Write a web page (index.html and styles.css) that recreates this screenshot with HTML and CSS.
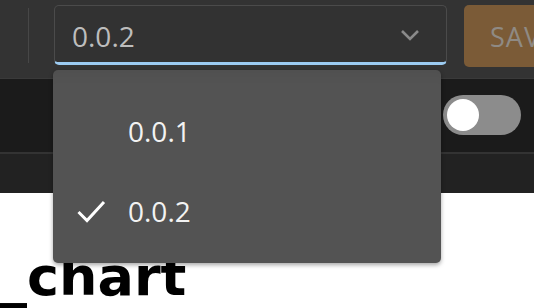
FILE: index.html
```html
<!DOCTYPE html>
<html>
<head>
<meta charset="utf-8">
<link rel="stylesheet" href="styles.css">
</head>
<body>
<div class="page">
  <header class="topbar">
    <div class="divider"></div>
    <div class="select">
      <span class="select-value">0.0.2</span>
      <svg class="chevron" width="20" height="12" viewBox="0 0 20 12"><path d="M2 2 L10 10 L18 2" fill="none" stroke="#8a8a8a" stroke-width="2.6"/></svg>
    </div>
    <button class="save">SAVE</button>
  </header>
  <div class="toolbar">
    <div class="toggle"><div class="knob"></div></div>
  </div>
  <div class="subbar"></div>
  <main class="content">
    <h1 class="title">_chart</h1>
  </main>
  <ul class="menu">
    <li class="menu-item"><span class="check"></span><span>0.0.1</span></li>
    <li class="menu-item"><span class="check"><svg width="30" height="24" viewBox="0 0 30 24"><path d="M2.5 12 L11 20.5 L28 2" fill="none" stroke="#fff" stroke-width="3"/></svg></span><span>0.0.2</span></li>
  </ul>
</div>
</body>
</html>
```

FILE: styles.css
```css
html, body {
  margin: 0;
  padding: 0;
  background: #fff;
  overflow: hidden;
}
.page {
  position: relative;
  width: 534px;
  height: 308px;
  overflow: hidden;
  font-family: "Open Sans", "Noto Sans", sans-serif;
}
.topbar {
  height: 78px;
  background: #333333;
  border-bottom: 1px solid #3a3a3a;
  display: flex;
  align-items: flex-start;
  box-sizing: content-box;
  overflow: hidden;
}
.divider {
  flex-shrink: 0;
  width: 1px;
  height: 55px;
  margin: 8px 0 0 28px;
  background: #474747;
}
.select {
  flex-shrink: 0;
  margin: 5px 0 0 25px;
  width: 393px;
  height: 60px;
  box-sizing: border-box;
  border: 1px solid #4b4b4b;
  border-bottom: 3px solid #9ccbf1;
  border-radius: 5px;
  background: #323232;
  display: flex;
  align-items: center;
  padding: 0 26px 0 17px;
}
.select-value {
  flex: 1;
  color: #bdbdbd;
  font-size: 28px;
  line-height: 1;
  margin-top: 3px;
}
.chevron {
  display: block;
  margin-top: 2px;
}
.save {
  flex-shrink: 0;
  margin: 5px 0 0 17px;
  width: 120px;
  height: 62px;
  border: none;
  border-radius: 5px;
  background: #7b5b37;
  color: #8f8a84;
  font-family: "Open Sans", "Noto Sans", sans-serif;
  font-size: 27px;
  text-align: left;
  padding: 0 0 0 26px;
  letter-spacing: 1px;
}
.toolbar {
  height: 73px;
  background: #1b1b1b;
  border-bottom: 2px solid #333333;
  display: flex;
  align-items: center;
  justify-content: flex-end;
  padding-right: 13px;
}
.toggle {
  width: 78px;
  height: 40px;
  border-radius: 20px;
  background: #8c8c8c;
  display: flex;
  align-items: center;
  padding-left: 4px;
  box-sizing: border-box;
  margin-top: -2px;
}
.knob {
  width: 32px;
  height: 32px;
  border-radius: 50%;
  background: #ffffff;
}
.subbar {
  height: 39px;
  background: #222222;
}
.content {
  background: #fff;
}
.title {
  margin: 0;
  padding-top: 57px;
  font-family: "DejaVu Sans", sans-serif;
  font-weight: bold;
  font-size: 54px;
  line-height: 54px;
  color: #000;
  white-space: nowrap;
}
.menu {
  position: absolute;
  left: 53px;
  top: 70px;
  width: 388px;
  height: 193px;
  margin: 0;
  padding: 21px 0 0 0;
  box-sizing: border-box;
  list-style: none;
  background: #535353;
  border-radius: 5px;
  box-shadow: 0 2px 4px rgba(0,0,0,0.35), inset 0 16px 16px -16px rgba(0,0,0,0.08);
}
.menu-item {
  height: 80px;
  display: flex;
  align-items: center;
  color: #f2f2f2;
  font-size: 28px;
  line-height: 1;
  padding-left: 23px;
}
.check {
  width: 52px;
  display: flex;
  align-items: center;
}
.check svg {
  display: block;
  margin-top: 2px;
}
```
